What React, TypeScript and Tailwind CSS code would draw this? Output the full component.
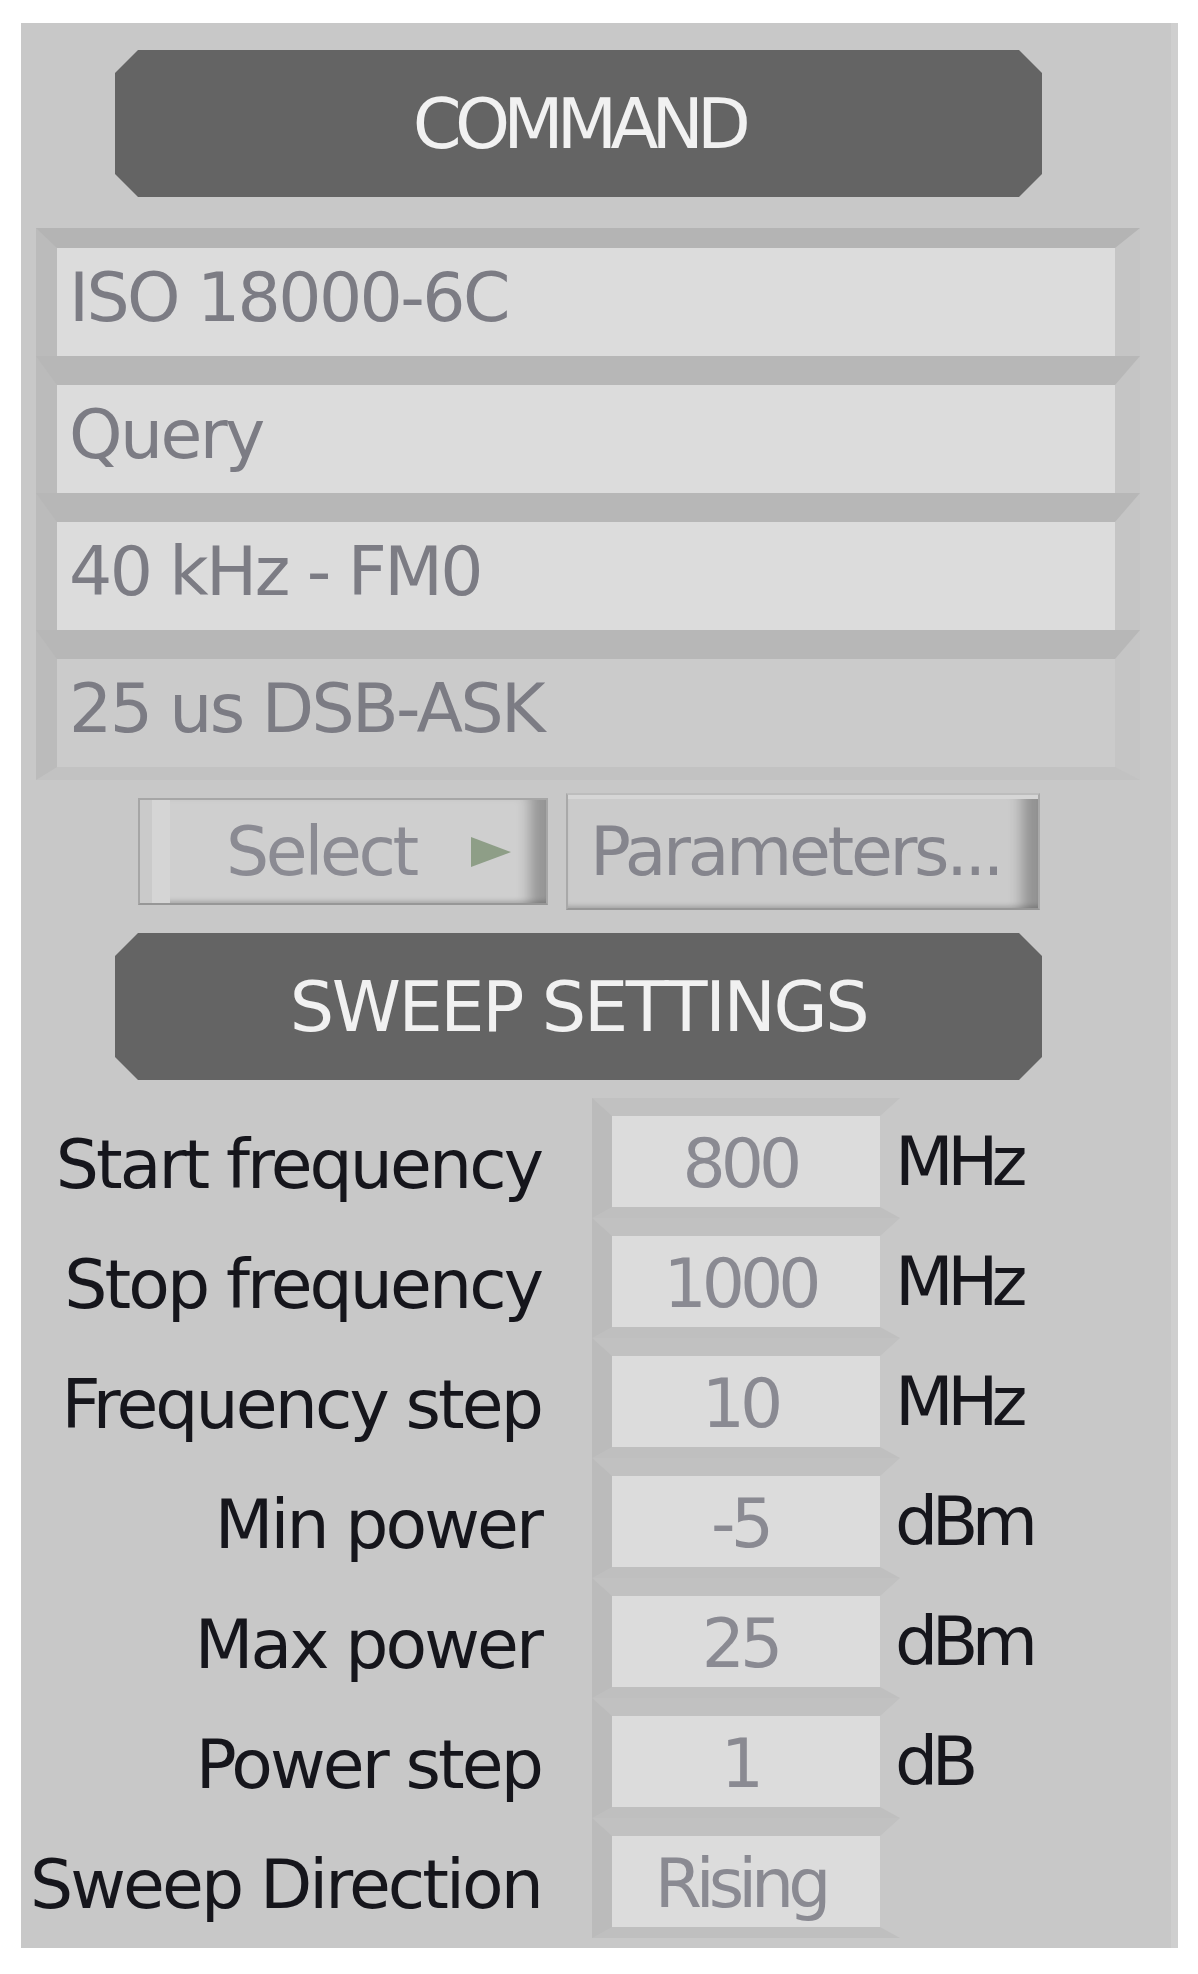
import React from "react";

const chamfer =
  "[clip-path:polygon(23px_0,calc(100%_-_23px)_0,100%_23px,100%_calc(100%_-_23px),calc(100%_-_23px)_100%,23px_100%,0_calc(100%_-_23px),0_23px)]";

function Header({ text, spacing }: { text: string; spacing: string }) {
  return (
    <div
      className={`ml-[94px] w-[927px] h-[147px] bg-[#646464] flex items-center justify-center ${chamfer}`}
    >
      <span className={`text-[70px] leading-none text-[#f1f1f1] ${spacing}`}>{text}</span>
    </div>
  );
}

const listItems = [
  { text: "ISO 18000-6C", bg: "bg-[#dcdcdc]" },
  { text: "Query", bg: "bg-[#dcdcdc]" },
  { text: "40 kHz - FM0", bg: "bg-[#dcdcdc]" },
  { text: "25 us DSB-ASK", bg: "bg-[#cbcbcb]" },
];

const rows = [
  { label: "Start frequency", value: "800", unit: "MHz" },
  { label: "Stop frequency", value: "1000", unit: "MHz" },
  { label: "Frequency step", value: "10", unit: "MHz" },
  { label: "Min power", value: "-5", unit: "dBm" },
  { label: "Max power", value: "25", unit: "dBm" },
  { label: "Power step", value: "1", unit: "dB" },
  { label: "Sweep Direction", value: "Rising", unit: "" },
];

export default function App() {
  return (
    <div
      className="w-[1198px] h-[1974px] bg-white pt-[23px] pl-[21px]"
      style={{ fontFamily: '"DejaVu Sans", Verdana, sans-serif' }}
    >
      <div className="w-[1157px] h-[1925px] bg-[#c8c8c8] border-r-[7px] border-[#cfcfcf] pt-[27px] flex flex-col">
        <Header text="COMMAND" spacing="tracking-[-6.8px]" />

        {/* command list */}
        <div className="mt-[31px] ml-[15px] w-[1104px] flex flex-col">
          {listItems.map((it, i) => (
            <div
              key={it.text}
              className={`${i === 0 ? "border-t-[20px] border-t-[#b4b4b4]" : "border-t-[29px] border-t-[#b7b7b7]"} ${
                i === listItems.length - 1 ? "border-b-[13px] border-b-[#c2c2c2]" : ""
              } border-l-[21px] border-l-[#bbbbbb] border-r-[25px] border-r-[#c5c5c5]`}
            >
              <div className={`${it.bg} h-[108px] flex items-center pl-[12px] pb-[8px]`}>
                <span className="text-[68px] leading-none text-[#7c7c84] tracking-[-2.6px] whitespace-nowrap">
                  {it.text}
                </span>
              </div>
            </div>
          ))}
        </div>

        {/* buttons */}
        <div className="mt-[13px] flex items-start">
          <div className="mt-[5px] ml-[117px] w-[410px] h-[107px] border-2 border-[#a6a6a6] border-b-[#979797] bg-[#cfcfcf] shadow-[inset_12px_0_0_0_#cacaca,inset_30px_0_0_0_#d5d5d5,inset_-26px_0_14px_-10px_rgba(0,0,0,0.28),inset_0_-5px_5px_-3px_rgba(0,0,0,0.18)] flex items-center pl-[86px]">
            <span className="text-[68px] leading-none text-[#8b8b93] tracking-[-3.3px]">Select</span>
            <svg width="42" height="32" viewBox="0 0 42 32" className="ml-[54px]">
              <polygon points="1,1 41,16 1,31" fill="#8e9e87" />
            </svg>
          </div>
          <div className="ml-[18px] w-[474px] h-[117px] border-2 border-[#a9a9a9] border-t-[#bdbdbd] border-b-[#979797] bg-[#cbcbcb] shadow-[inset_0_4px_0_0_#d6d6d6,inset_-26px_0_14px_-10px_rgba(0,0,0,0.28),inset_0_-5px_5px_-3px_rgba(0,0,0,0.18)] flex items-center pl-[22px]">
            <span className="text-[68px] leading-none text-[#85858d] tracking-[-3.3px] whitespace-nowrap">
              Parameters...
            </span>
          </div>
        </div>

        <div className="mt-[23px]">
          <Header text="SWEEP SETTINGS" spacing="tracking-[-2.4px]" />
        </div>

        {/* sweep rows */}
        <div className="mt-[18px] flex flex-col">
          {rows.map((r) => (
            <div key={r.label} className="h-[120px] flex items-center">
              <div className="w-[520px] text-right pt-[14px]">
                <span className="text-[68px] leading-none text-[#16161c] tracking-[-2.9px] whitespace-nowrap">
                  {r.label}
                </span>
              </div>
              <div className="ml-[51px] w-[308px] h-[120px] border-t-[18px] border-t-[#c1c1c1] border-l-[20px] border-l-[#bbbbbb] border-r-[20px] border-r-[#c8c8c8] border-b-[11px] border-b-[#bfbfbf]">
                <div className="h-[91px] bg-[#dcdcdc] flex items-center justify-center pt-[4px] pr-[12px]">
                  <span
                    className={`text-[68px] leading-none text-[#8a8a92] whitespace-nowrap ${
                      r.value === "Rising" ? "tracking-[-6px]" : "tracking-[-5px]"
                    }`}
                  >
                    {r.value}
                  </span>
                </div>
              </div>
              {r.unit && (
                <div className="ml-[-5px] pt-[8px]">
                  <span className="text-[68px] leading-none text-[#16161c] tracking-[-6.5px]">{r.unit}</span>
                </div>
              )}
            </div>
          ))}
        </div>
      </div>
    </div>
  );
}
